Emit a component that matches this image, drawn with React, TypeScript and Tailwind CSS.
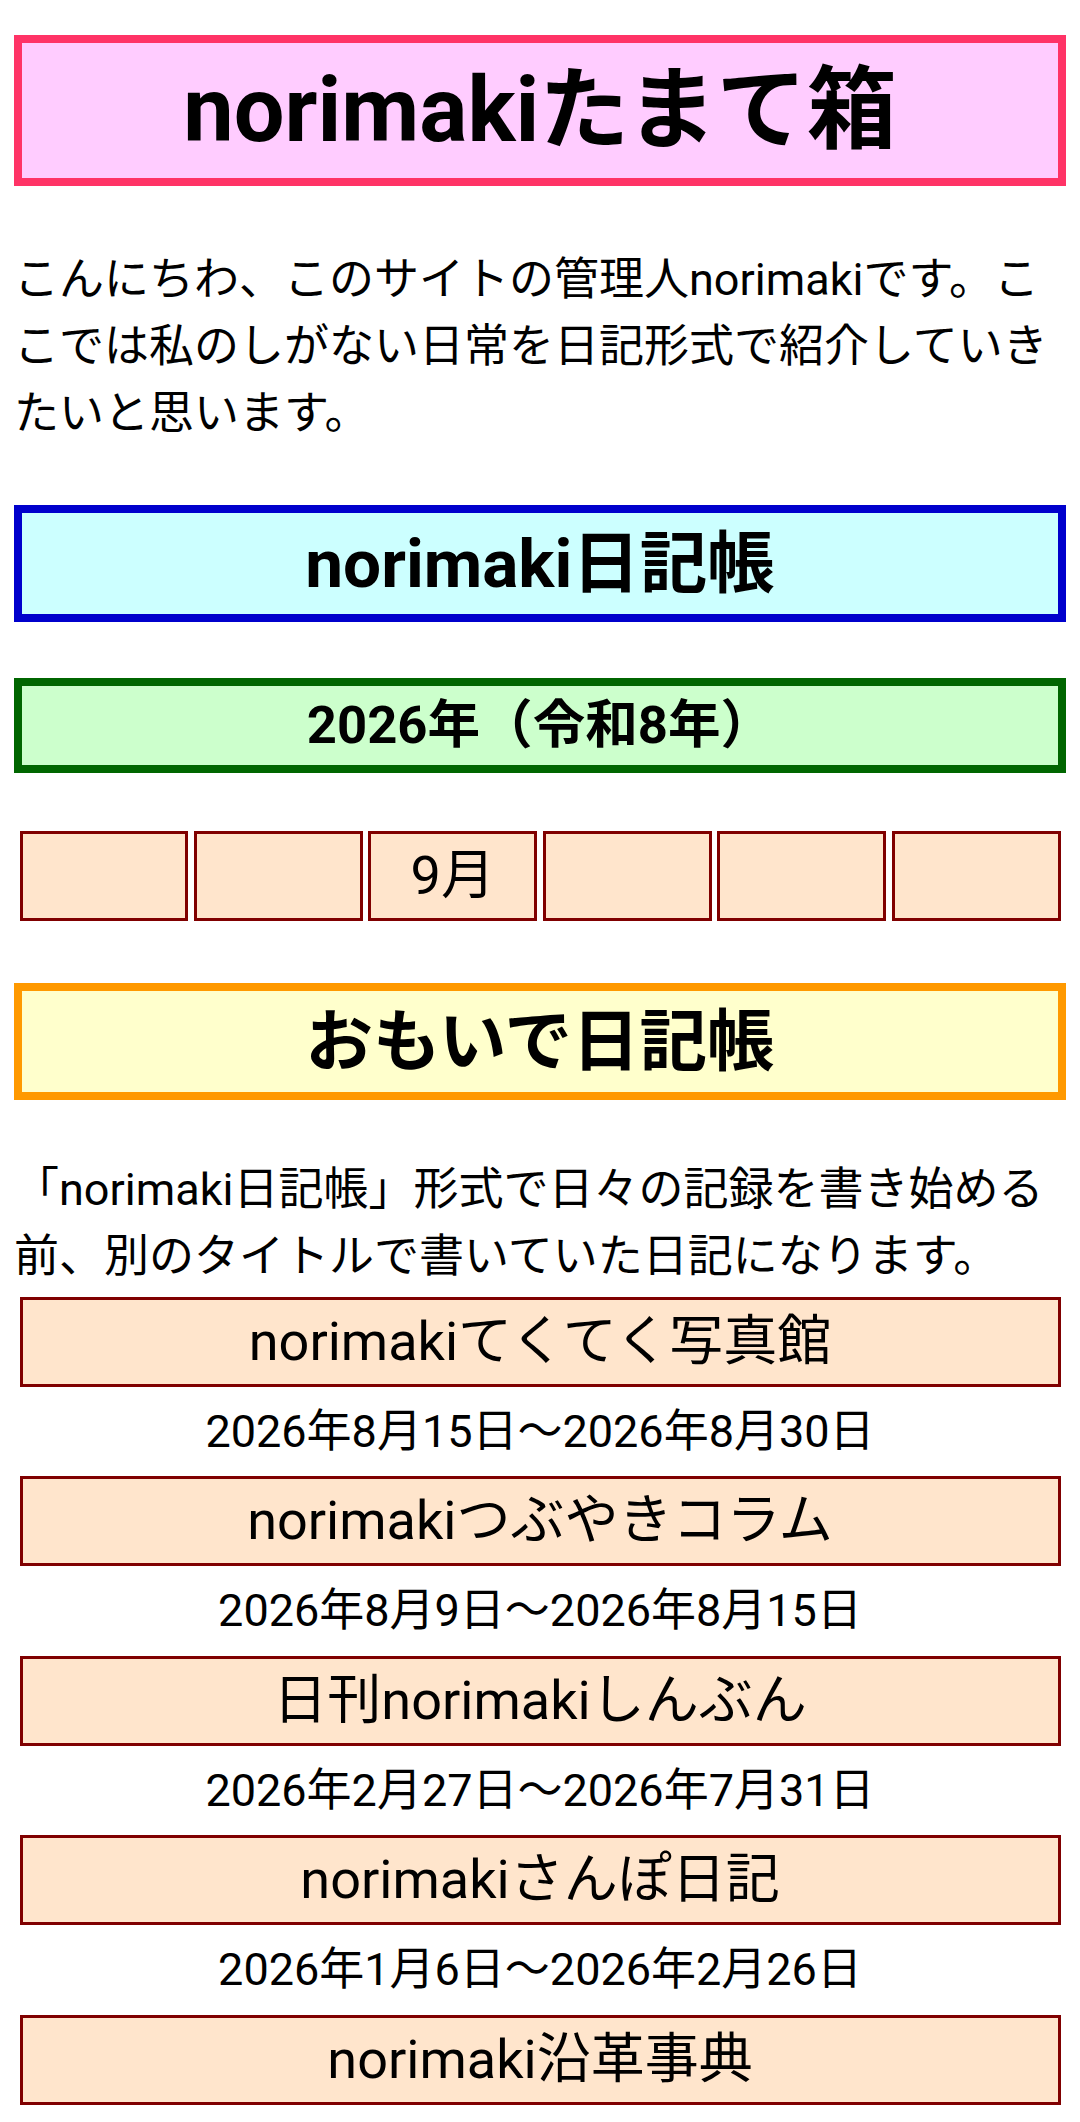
const months = ['', '', '9月', '', '', ''];

const diaries = [
  { title: 'norimakiてくてく写真館', period: '2026年8月15日〜2026年8月30日' },
  { title: 'norimakiつぶやきコラム', period: '2026年8月9日〜2026年8月15日' },
  { title: '日刊norimakiしんぶん', period: '2026年2月27日〜2026年7月31日' },
  { title: 'norimakiさんぽ日記', period: '2026年1月6日〜2026年2月26日' },
  { title: 'norimaki沿革事典', period: '' },
];

export default function App() {
  return (
    <div className="min-h-[2122px] bg-white px-[14px] pt-[35px] text-black font-['Roboto','Noto_Sans_CJK_JP',sans-serif]">
      {/* Site title */}
      <h1 className="flex h-[151px] items-center justify-center border-[8px] border-[#ff3366] bg-[#ffccff] text-[90px] font-bold leading-none">
        norimakiたまて箱
      </h1>

      <p className="mt-[60px] text-[45px] leading-[67px]">
        こんにちわ、このサイトの管理人norimakiです。ここでは私のしがない日常を日記形式で紹介していきたいと思います。
      </p>

      {/* Diary */}
      <h2 className="mt-[58px] flex h-[117px] items-center justify-center border-[8px] border-[#0000cc] bg-[#ccffff] text-[67.5px] font-bold leading-none">
        norimaki日記帳
      </h2>

      <h3 className="mt-[56px] flex h-[95px] items-center justify-center border-[8px] border-[#006600] bg-[#ccffcc] text-[52.6px] font-bold leading-none">
        2026年（令和8年）
      </h3>

      <div className="mt-[52.5px] grid grid-cols-6 gap-[5.5px] p-[5.5px]">
        {months.map((m, i) => (
          <div
            key={i}
            className="flex h-[90px] items-center justify-center border-[3px] border-[#800000] bg-[#ffe5cc] text-[54px] leading-none"
          >
            {m}
          </div>
        ))}
      </div>

      {/* Old diaries */}
      <h2 className="mt-[56.5px] flex h-[117px] items-center justify-center border-[8px] border-[#ff9900] bg-[#ffffcc] text-[67.5px] font-bold leading-none">
        おもいで日記帳
      </h2>

      <p className="mt-[55.5px] text-[45px] leading-[67px]">
        「norimaki日記帳」形式で日々の記録を書き始める前、別のタイトルで書いていた日記になります。
      </p>

      <div className="mt-[7px] flex flex-col px-[5.5px]">
        {diaries.map((d) => (
          <div key={d.title}>
            <div className="flex h-[90px] items-center justify-center border-[3px] border-[#800000] bg-[#ffe5cc] text-[54px] leading-none">
              {d.title}
            </div>
            {d.period && (
              <div className="flex h-[89.5px] items-center justify-center text-[45px] leading-none">
                {d.period}
              </div>
            )}
          </div>
        ))}
      </div>
    </div>
  );
}
